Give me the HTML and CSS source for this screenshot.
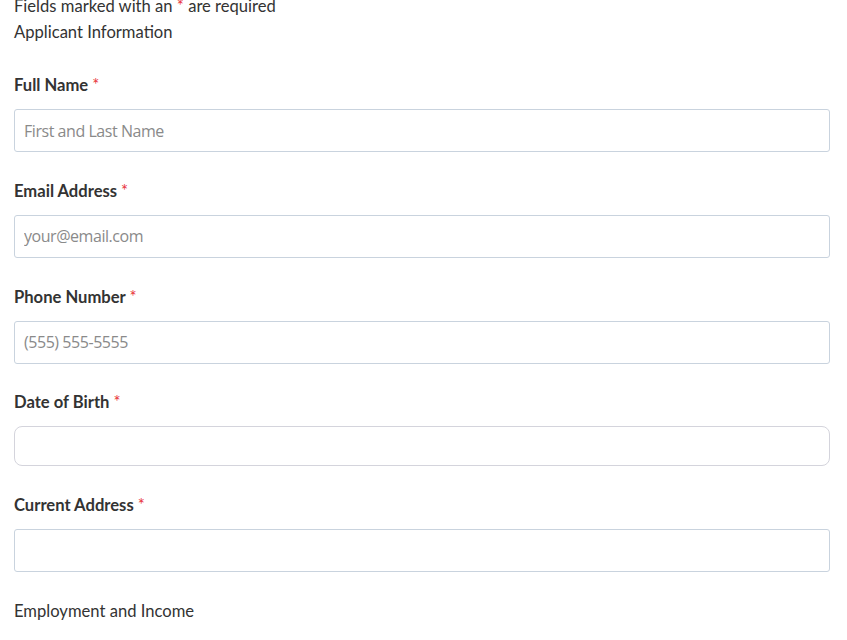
FILE: index.html
```html
<!DOCTYPE html>
<html lang="en">
<head>
  <meta charset="UTF-8">
  <meta name="viewport" content="width=device-width, initial-scale=1.0">
  <title>Application</title>
  <link rel="stylesheet" href="styles.css">
</head>
<body>
  <form class="form">
    <p class="note">Fields marked with an <span class="req">*</span> are required</p>
    <h2 class="section">Applicant Information</h2>

    <div class="field">
      <label for="name">Full Name <span class="req">*</span></label>
      <input type="text" id="name" placeholder="First and Last Name">
    </div>

    <div class="field">
      <label for="email">Email Address <span class="req">*</span></label>
      <input type="email" id="email" placeholder="your@email.com">
    </div>

    <div class="field">
      <label for="phone">Phone Number <span class="req">*</span></label>
      <input type="tel" id="phone" placeholder="(555) 555-5555">
    </div>

    <div class="field">
      <label for="dob">Date of Birth <span class="req">*</span></label>
      <input type="text" id="dob" class="date">
    </div>

    <div class="field">
      <label for="address">Current Address <span class="req">*</span></label>
      <input type="text" id="address">
    </div>

    <h2 class="section">Employment and Income</h2>
  </form>
</body>
</html>
```

FILE: styles.css
```css
body {
  margin: 0;
  background-color: #fff;
  color: #333;
  font-family: Lato, "Liberation Sans", sans-serif;
  overflow: hidden;
}
.form {
  margin-top: -7px;
  padding: 0 17px 0 14px;
}
.note {
  margin: 0;
  font-size: 16.6px;
  line-height: 26px;
}
.section {
  margin: 0;
  font-size: 16.6px;
  font-weight: normal;
  line-height: 26px;
}
.req {
  color: #e8333a;
  font-weight: normal;
}
.field {
  margin-top: 28px;
}
.field + .field {
  margin-top: 26.75px;
}
.field + .section {
  margin-top: 26px;
}
.field label {
  display: block;
  font-size: 16.6px;
  font-weight: bold;
  line-height: 24px;
  margin-bottom: 12px;
}
.field input {
  display: block;
  box-sizing: border-box;
  width: 100%;
  height: 43px;
  padding: 0 9px;
  border: 1px solid #c9d3de;
  border-radius: 3px;
  font-family: "Open Sans", sans-serif;
  font-size: 16px;
  letter-spacing: -0.45px;
  color: #333;
  background-color: #fff;
}
.field input::placeholder {
  color: #8a8a8a;
}
.field input.date {
  height: 40px;
  border-color: #d4d4dc;
  border-radius: 8px;
}
```
